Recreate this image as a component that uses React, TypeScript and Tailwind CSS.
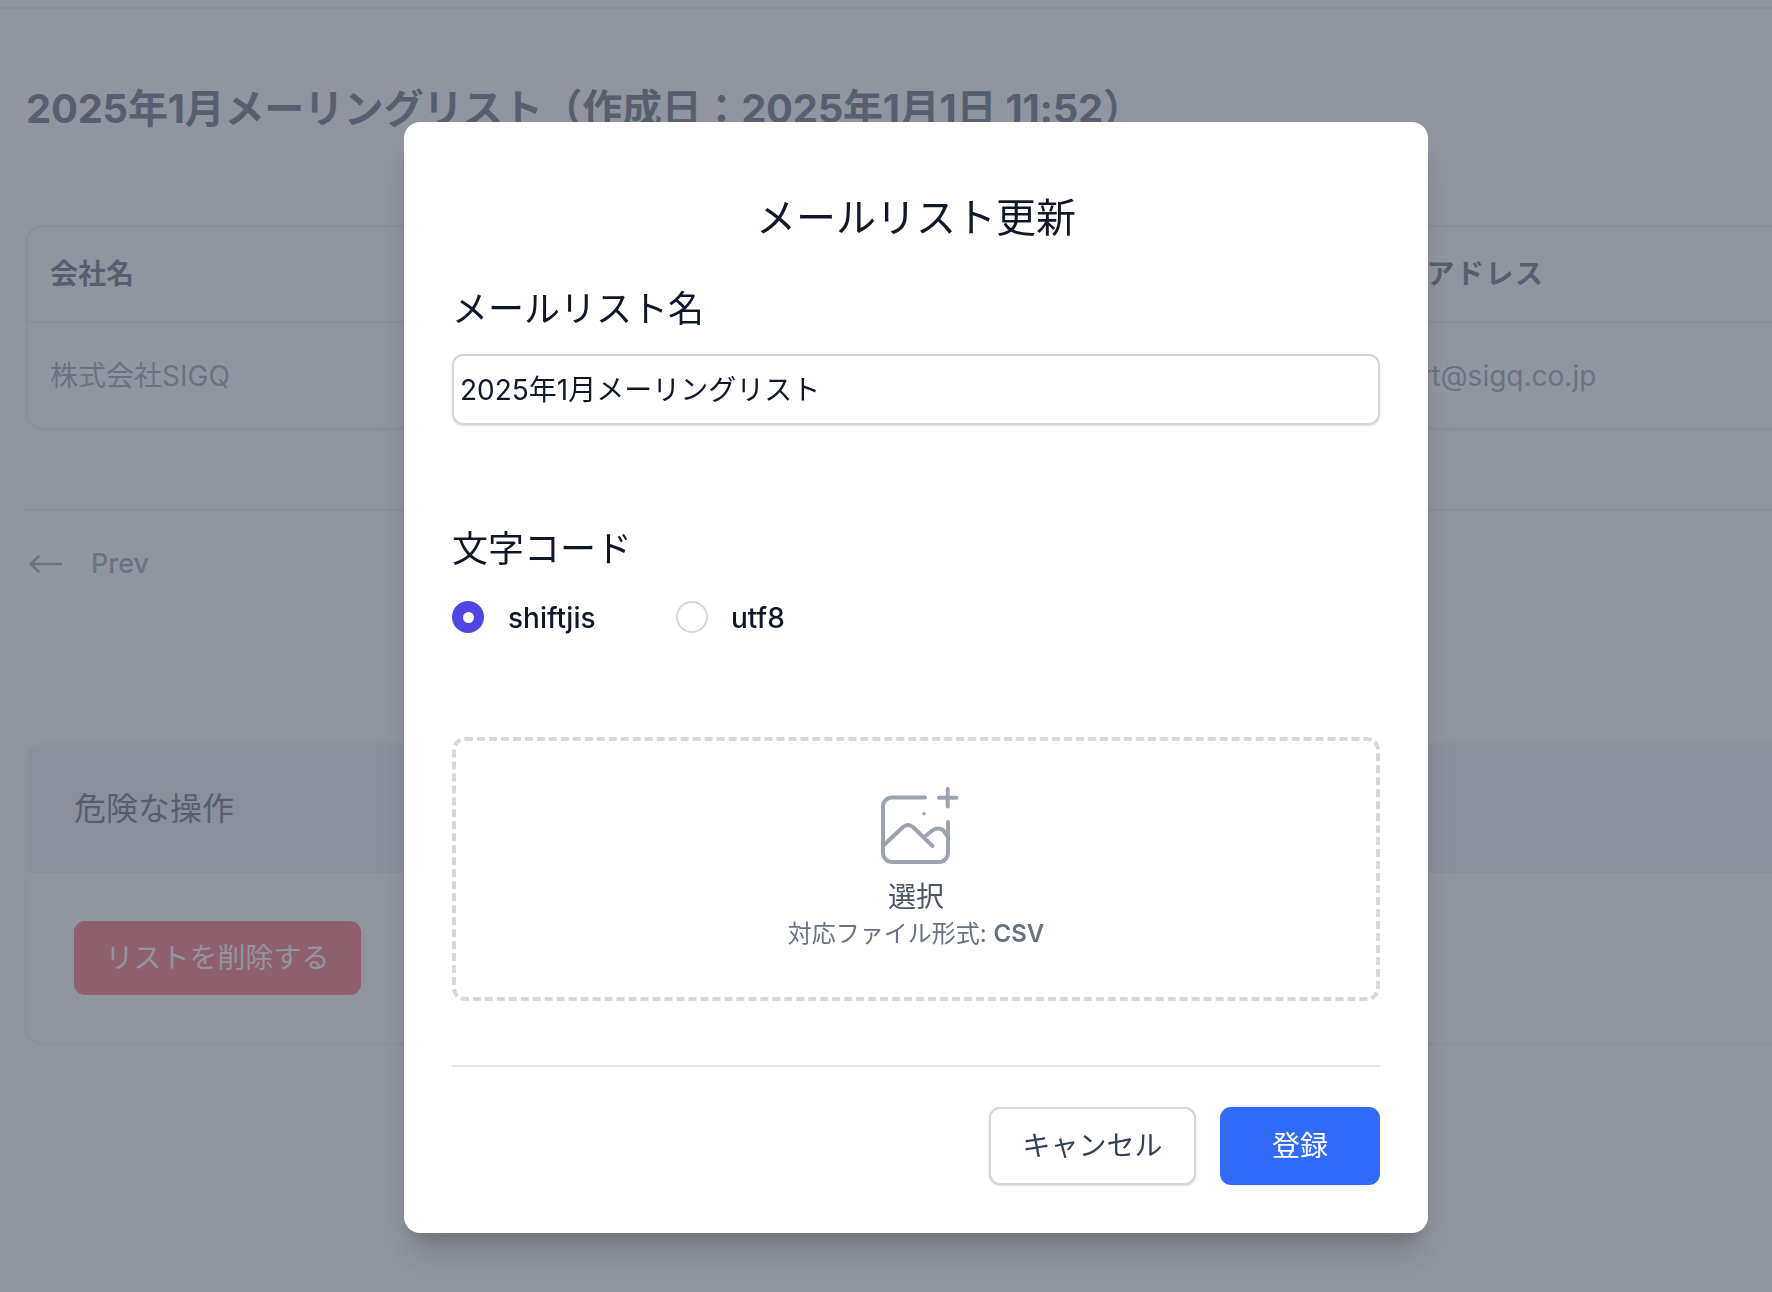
const font = { fontFamily: '"Inter", "Noto Sans CJK JP", sans-serif' };

function ImagePlusIcon() {
  return (
    <svg width="88" height="80" viewBox="32 15 88 80" fill="none" stroke="#9ca3af" strokeWidth="4" strokeLinecap="round" strokeLinejoin="round">
      <path d="M85 27.5H52a9 9 0 0 0-9 9V83a9 9 0 0 0 9 9h47a9 9 0 0 0 9-9V52" />
      <path d="M107.7 19v17.5M99 27.7h17.5" />
      <path d="M44 75l19-18q5-4 10 0l19.5 19" />
      <path d="M86 65.5l7-5.500q5-3 10 0l5 7" />
      <circle cx="84" cy="43.700" r="1.200" fill="#9ca3af" strokeWidth="1.200" />
    </svg>
  );
}

function Background() {
  return (
    <div className="w-[1900px] h-full bg-white">
      <div className="h-[9px] border-b-2 border-gray-200" />
      <main className="pl-[26px]">
        <h1 className="mt-[76px] h-[48px] text-[40px] leading-[48px] font-bold tracking-[-0.25px] text-gray-800 whitespace-nowrap">
          2025年1月メーリングリスト（作成日：2025年1月1日 11:52）
        </h1>
        <div className="mt-[92px] h-[204px] rounded-2xl border-2 border-gray-200 shadow-sm">
          <div className="h-[96px] flex items-center pl-[22px] border-b-2 border-gray-200 text-[28px] font-semibold text-gray-800">
            <div className="w-[1288px]">会社名</div>
            <div className="tracking-[1.5px]">メールアドレス</div>
          </div>
          <div className="h-[105px] flex items-center pl-[22px] text-[28px] text-gray-500">
            <div className="w-[1288px]">株式会社SIGQ</div>
            <div>support@sigq.co.jp</div>
          </div>
        </div>
        <div className="mt-[80px] h-[108px] border-t-2 border-gray-200 flex items-center gap-[28px] text-gray-500">
          <svg width="34" height="22" viewBox="0 0 34 22" fill="none" stroke="currentColor" strokeWidth="2.700" strokeLinecap="round" strokeLinejoin="round" className="ml-[3px]">
            <path d="M32 11H2M9.500 3.500L2 11l7.500 7.500" />
          </svg>
          <span className="text-[27px] font-medium">Prev</span>
        </div>
        <div className="mt-[125px] h-[302px] rounded-2xl shadow-sm border-2 border-gray-100 overflow-hidden">
          <div className="h-[129px] bg-gray-200 flex items-center pl-[46px] text-[32px] text-gray-800">危険な操作</div>
          <div className="pl-[46px] pt-[48px]">
            <button className="w-[287px] h-[74px] rounded-[11px] bg-red-500 text-white text-[28px]">リストを削除する</button>
          </div>
        </div>
      </main>
    </div>
  );
}

function MailListModal() {
  return (
    <div className="fixed inset-0 bg-[#6b7280]/75 flex justify-start pl-[404px] pt-[122px]">
      <div className="w-[1024px] h-[1111px] bg-white rounded-2xl shadow-[0_27px_33px_-7px_rgba(0,0,0,0.16),0_11px_13px_-5px_rgba(0,0,0,0.1)] px-[48px] pt-[69px]">
        <h2 className="h-[53px] text-[40px] leading-[53px] text-center text-gray-900">メールリスト更新</h2>

        <label className="block mt-[41px] h-[48px] text-[36px] leading-[48px] text-gray-900">メールリスト名</label>
        <input
          readOnly
          value="2025年1月メーリングリスト"
          className="block mt-[21px] w-full h-[71px] pl-[6px] pb-[4px] rounded-[11px] border-2 border-gray-300 shadow-sm text-[28px] text-gray-900 outline-none"
          style={font}
        />

        <label className="block mt-[100px] h-[48px] text-[36px] leading-[48px] text-gray-900">文字コード</label>
        <div className="mt-[28px] h-[32px] flex items-center text-[28px] font-medium text-gray-900">
          <span className="w-[32px] h-[32px] rounded-full bg-[#4f46e5] flex items-center justify-center">
            <span className="w-[11px] h-[11px] rounded-full bg-white" />
          </span>
          <span className="ml-[24px] pt-[1px] w-[168px]">shiftjis</span>
          <span className="w-[32px] h-[32px] rounded-full border-2 border-gray-300" />
          <span className="ml-[23px] pt-[1px]">utf8</span>
        </div>

        <div className="mt-[104px] h-[264px] rounded-[13px] border-[4px] border-dashed border-[#d6d8dd] flex flex-col items-center pt-[44px]">
          <ImagePlusIcon />
          <div className="mt-[13px] h-[38px] text-[28px] leading-[38px] text-gray-600">選択</div>
          <div className="mt-[1px] h-[34px] text-[24px] leading-[34px] text-gray-500">
            対応ファイル形式: <span className="font-semibold">CSV</span>
          </div>
        </div>

        <div className="mt-[64px] h-[2px] bg-gray-200" />

        <div className="mt-[40px] flex justify-end gap-[24px]">
          <button className="w-[207px] h-[78px] rounded-[11px] border-2 border-gray-300 bg-white shadow-sm text-[28px] text-gray-700">キャンセル</button>
          <button className="w-[160px] h-[78px] rounded-[11px] bg-[#316bf9] text-white text-[28px]">登録</button>
        </div>
      </div>
    </div>
  );
}

export default function App() {
  return (
    <div className="relative h-[1292px] overflow-hidden" style={font}>
      <Background />
      <MailListModal />
    </div>
  );
}
